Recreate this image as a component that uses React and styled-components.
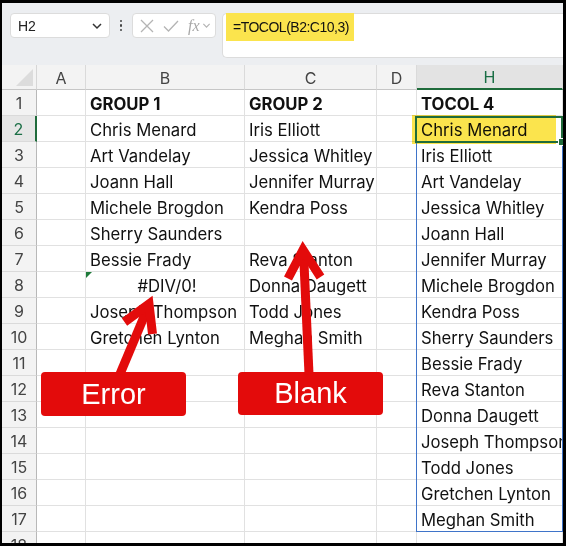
import React from "react"
import styled, { createGlobalStyle } from "styled-components"

const GlobalStyle = createGlobalStyle`
  body {
    margin: 0;
    background: #fff;
    font-family: Inter, "Noto Sans", sans-serif;
  }
`

const COLS = ["A", "B", "C", "D", "H"]

const groupOne = [
  "Chris Menard",
  "Art Vandelay",
  "Joann Hall",
  "Michele Brogdon",
  "Sherry Saunders",
  "Bessie Frady",
  "#DIV/0!",
  "Joseph Thompson",
  "Gretchen Lynton",
]

const groupTwo = [
  "Iris Elliott",
  "Jessica Whitley",
  "Jennifer Murray",
  "Kendra Poss",
  "",
  "Reva Stanton",
  "Donna Daugett",
  "Todd Jones",
  "Meghan Smith",
]

const tocol = [
  "Chris Menard",
  "Iris Elliott",
  "Art Vandelay",
  "Jessica Whitley",
  "Joann Hall",
  "Jennifer Murray",
  "Michele Brogdon",
  "Kendra Poss",
  "Sherry Saunders",
  "Bessie Frady",
  "Reva Stanton",
  "Donna Daugett",
  "Joseph Thompson",
  "Todd Jones",
  "Gretchen Lynton",
  "Meghan Smith",
]

const buildRows = () => {
  const rows = [["", "GROUP 1", "GROUP 2", "", "TOCOL 4"]]
  for (let i = 0; i < 17; i++) {
    rows.push(["", groupOne[i] || "", groupTwo[i] || "", "", tocol[i] || ""])
  }
  return rows
}

const App = () => {
  const rows = buildRows()

  return (
    <Screen>
      <GlobalStyle />
      <Frame>
        <Toolbar>
          <NameBox>
            <span>H2</span>
            <Chevron size={14} />
          </NameBox>
          <Dots>
            <i />
            <i />
            <i />
          </Dots>
          <EditBox>
            <svg width="14" height="14" viewBox="0 0 14 14">
              <path d="M1 1 L13 13 M13 1 L1 13" stroke="#b4b4b4" strokeWidth="1.3" fill="none" />
            </svg>
            <svg width="16" height="14" viewBox="0 0 16 14">
              <path d="M1 7.5 L5.5 12 L15 2" stroke="#b4b4b4" strokeWidth="1.3" fill="none" />
            </svg>
            <Fx>fx</Fx>
            <Chevron size={11} light />
          </EditBox>
          <FormulaBox>
            <FormulaText>=TOCOL(B2:C10,3)</FormulaText>
          </FormulaBox>
        </Toolbar>

        <Sheet>
          <Corner />
          {COLS.map((c, i) => (
            <ColHeader key={c} $col={i + 2} $selected={c === "H"}>
              {c}
            </ColHeader>
          ))}
          {rows.map((row, r) => (
            <React.Fragment key={r}>
              <RowHeader $row={r + 2} $selected={r === 1}>
                {r + 1}
              </RowHeader>
              {row.map((value, c) => (
                <Cell
                  key={c}
                  $row={r + 2}
                  $col={c + 2}
                  $bold={r === 0}
                  $error={value === "#DIV/0!"}
                >
                  {value}
                </Cell>
              ))}
            </React.Fragment>
          ))}
          <Highlight />
          <SpillRange />
          <ActiveCell />
        </Sheet>
      </Frame>

      <Callout $left={41} $top={372} $width={145} $height={44}>
        Error
      </Callout>
      <Callout $left={238} $top={372} $width={145} $height={43}>
        Blank
      </Callout>
      <Arrows viewBox="0 0 566 546">
        <path d="M120 374 L148.5 306" />
        <path d="M124.5 322 L149 304 L152.5 334" />
        <path d="M309 374 L303.5 252" />
        <path d="M288 278.5 L303 250 L320.5 277" />
      </Arrows>
    </Screen>
  )
}

const Chevron = ({ size, light }) => (
  <svg width={size} height={size} viewBox="0 0 14 14">
    <path
      d="M3 5 L7 9 L11 5"
      stroke={light ? "#b4b4b4" : "#333"}
      strokeWidth="1.5"
      fill="none"
    />
  </svg>
)

const Screen = styled.div`
  position: relative;
  width: 566px;
  height: 546px;
  overflow: hidden;
`

const Frame = styled.div`
  box-sizing: border-box;
  width: 566px;
  height: 546px;
  border-style: solid;
  border-color: #000;
  border-width: 3px 3px 3px 2px;
  overflow: hidden;
  background: #fff;
`

const Toolbar = styled.div`
  display: flex;
  align-items: flex-start;
  height: 62px;
  padding: 10px 0 0 8px;
  box-sizing: border-box;
  background: #eceef1;
`

const NameBox = styled.div`
  box-sizing: border-box;
  width: 100px;
  height: 25px;
  display: flex;
  align-items: center;
  justify-content: space-between;
  padding: 0 5px 0 7px;
  background: #fff;
  border: 1px solid #dcdcdc;
  border-radius: 4px;
  font-family: "Liberation Sans", Arial, sans-serif;
  font-size: 14px;
  color: #222;
`

const Dots = styled.div`
  width: 22px;
  height: 25px;
  display: flex;
  flex-direction: column;
  align-items: center;
  justify-content: center;
  gap: 2px;

  i {
    width: 2.5px;
    height: 2.5px;
    border-radius: 50%;
    background: #444;
  }
`

const EditBox = styled.div`
  box-sizing: border-box;
  width: 84px;
  height: 25px;
  display: flex;
  align-items: center;
  gap: 9px;
  padding: 0 3px 0 7px;
  background: #fff;
  border: 1px solid #dcdcdc;
  border-radius: 4px;
`

const Fx = styled.span`
  font-family: "Liberation Serif", "DejaVu Serif", serif;
  font-style: italic;
  font-size: 16px;
  color: #a8a8a8;
  margin-right: -8px;
`

const FormulaBox = styled.div`
  box-sizing: border-box;
  flex: 1;
  height: 45px;
  margin-left: 6px;
  padding-left: 3px;
  background: #fff;
  border: 1px solid #dcdcdc;
  border-right: none;
  border-radius: 5px 0 0 5px;
`

const FormulaText = styled.div`
  display: inline-block;
  width: 128px;
  height: 28px;
  margin-top: -1px;
  box-sizing: border-box;
  padding: 6px 0 0 7px;
  background: #fbe44d;
  font-family: "Liberation Sans", Arial, sans-serif;
  font-size: 14px;
  letter-spacing: -0.5px;
  color: #111;
`

const Sheet = styled.div`
  display: grid;
  grid-template-columns: 35px 49px 159px 132px 40px 146px;
  grid-template-rows: 25px;
  grid-auto-rows: 26px;
`

const headerBase = `
  box-sizing: border-box;
  display: flex;
  align-items: center;
  justify-content: center;
  padding-top: 1px;
  font-size: 16px;
  color: #444;
`

const Corner = styled.div`
  position: relative;
  grid-row: 1;
  grid-column: 1;
  background: #f3f3f3;
  border-right: 1px solid #d6d6d6;
  border-bottom: 1px solid #c6c6c6;

  &::after {
    content: "";
    position: absolute;
    right: 3px;
    bottom: 3px;
    width: 17px;
    height: 17px;
    background: #dcdcdc;
    clip-path: polygon(100% 0, 100% 100%, 0 100%);
  }
`

const ColHeader = styled.div`
  ${headerBase}
  grid-row: 1;
  grid-column: ${(p) => p.$col};
  background: ${(p) => (p.$selected ? "#e3e3e3" : "#f3f3f3")};
  color: ${(p) => (p.$selected ? "#1a6e45" : "#444")};
  border-right: 1px solid #dadada;
  border-bottom: ${(p) => (p.$selected ? "2px solid #1f6b3b" : "1px solid #c6c6c6")};
`

const RowHeader = styled.div`
  ${headerBase}
  grid-row: ${(p) => p.$row};
  grid-column: 1;
  background: ${(p) => (p.$selected ? "#e6e6e6" : "#f3f3f3")};
  color: ${(p) => (p.$selected ? "#1a6e45" : "#444")};
  border-bottom: 1px solid #dadada;
  border-right: ${(p) => (p.$selected ? "2px solid #1f6b3b" : "1px solid #b8b8b8")};
`

const Cell = styled.div`
  position: relative;
  grid-row: ${(p) => p.$row};
  grid-column: ${(p) => p.$col};
  box-sizing: border-box;
  display: flex;
  align-items: center;
  justify-content: ${(p) => (p.$error ? "center" : "flex-start")};
  padding: 2px 0 0 4px;
  overflow: hidden;
  white-space: nowrap;
  border-right: 1px solid #e1e1e1;
  border-bottom: 1px solid #e1e1e1;
  font-size: 16.7px;
  font-weight: ${(p) => (p.$bold ? 700 : 400)};
  color: #111;

  &::before {
    content: "";
    display: ${(p) => (p.$error ? "block" : "none")};
    position: absolute;
    left: 0;
    top: 0;
    width: 6px;
    height: 6px;
    background: #1e7b3a;
    clip-path: polygon(0 0, 100% 0, 0 100%);
  }
`

const Highlight = styled.div`
  position: relative;
  z-index: 1;
  grid-column: 6;
  grid-row: 3;
  margin: -1px 7px -2px -5px;
  background: #fbe44d;
  mix-blend-mode: multiply;
`

const SpillRange = styled.div`
  position: relative;
  z-index: 2;
  grid-column: 6;
  grid-row: 3 / 19;
  margin: 0 0 0 -1px;
  border: 1px solid #3f74c9;
`

const ActiveCell = styled.div`
  position: relative;
  z-index: 3;
  grid-column: 6;
  grid-row: 3;
  margin: 0 0 -1px -2px;
  border: 2px solid #1f6b3b;

  &::after {
    content: "";
    position: absolute;
    right: -5px;
    bottom: -5px;
    width: 6px;
    height: 6px;
    background: #1f6b3b;
    border: 1px solid #fff;
  }
`

const Callout = styled.div`
  position: absolute;
  left: ${(p) => p.$left}px;
  top: ${(p) => p.$top}px;
  width: ${(p) => p.$width}px;
  height: ${(p) => p.$height}px;
  display: flex;
  align-items: center;
  justify-content: center;
  background: #e30b0b;
  border-radius: 4px;
  color: #fff;
  font-family: "Liberation Sans", Arial, sans-serif;
  font-size: 29px;
`

const Arrows = styled.svg`
  position: absolute;
  left: 0;
  top: 0;
  width: 566px;
  height: 546px;
  pointer-events: none;

  path {
    fill: none;
    stroke: #e30b0b;
    stroke-width: 9;
    stroke-linejoin: miter;
  }
`

export default App
